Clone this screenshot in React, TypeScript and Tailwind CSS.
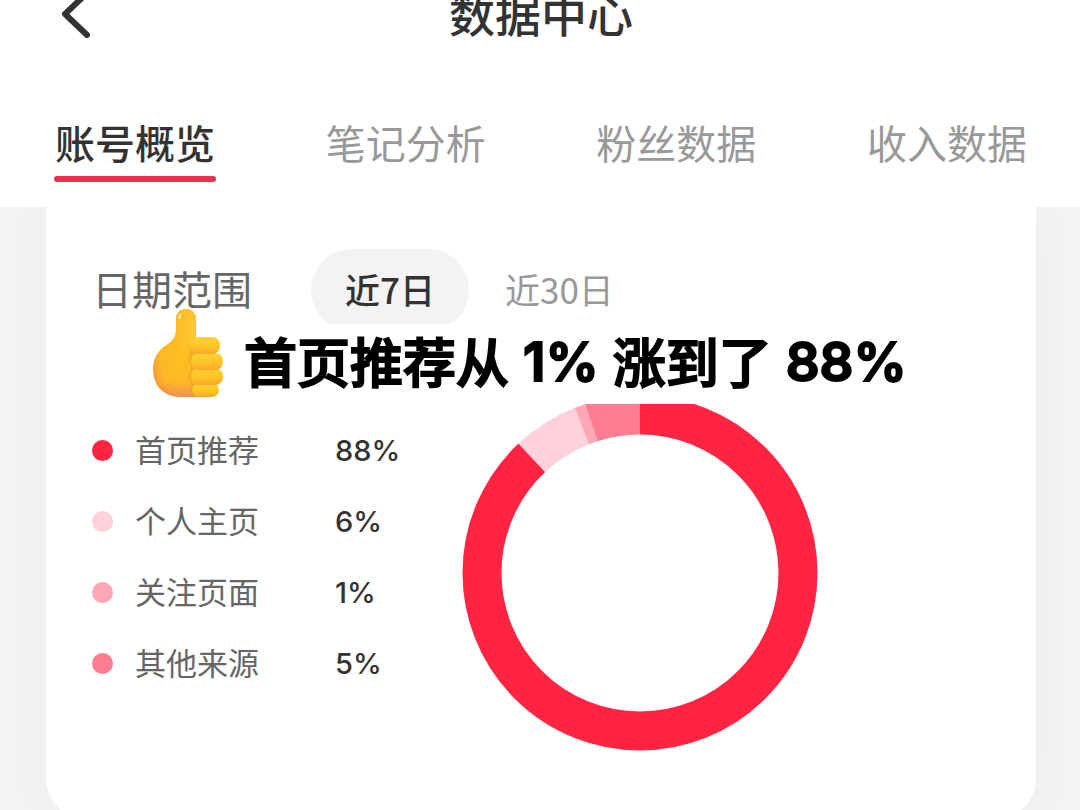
const tabs = ["账号概览", "笔记分析", "粉丝数据", "收入数据"];

const sources = [
  { name: "首页推荐", value: 88, dot: "bg-[#ff2442]", stroke: "stroke-[#ff2442]" },
  { name: "个人主页", value: 6, dot: "bg-[#ffd1da]", stroke: "stroke-[#ffd1da]" },
  { name: "关注页面", value: 1, dot: "bg-[#ffa7b5]", stroke: "stroke-[#ffa7b5]" },
  { name: "其他来源", value: 5, dot: "bg-[#ff7d90]", stroke: "stroke-[#ff7d90]" },
];

const ThumbsUp = () => (
  <svg viewBox="0 0 74 92" className="h-[92px] w-[74px] shrink-0" aria-hidden="true">
    <defs>
      <radialGradient id="palm" cx="0.62" cy="0.5" r="0.7">
        <stop offset="0" stopColor="#ffbf1f" />
        <stop offset="0.65" stopColor="#fdb827" />
        <stop offset="1" stopColor="#f2963a" />
      </radialGradient>
      <linearGradient id="thumb" x1="0" y1="0" x2="1" y2="0">
        <stop offset="0" stopColor="#f9a72f" />
        <stop offset="0.5" stopColor="#ffc42b" />
        <stop offset="1" stopColor="#ffd63c" />
      </linearGradient>
      <linearGradient id="finger" x1="0" y1="0" x2="0" y2="1">
        <stop offset="0" stopColor="#ffd335" />
        <stop offset="0.55" stopColor="#ffc426" />
        <stop offset="1" stopColor="#f8a829" />
      </linearGradient>
      <linearGradient id="base" x1="0" y1="0" x2="0" y2="1">
        <stop offset="0.82" stopColor="#f28a55" stopOpacity="0" />
        <stop offset="1" stopColor="#ee8461" stopOpacity="0.8" />
      </linearGradient>
    </defs>
    <path
      d="M24 11C24 5 28 1 34 1s10 4 10 10v22l2 8v48H29C12 89 1 78 1 61c0-12 6-20 15-25 6-4 8-8 8-15z"
      fill="url(#palm)"
    />
    <path d="M24 11C24 5 28 1 34 1s10 4 10 10v22c-6 3-10 5-12 10-3-4-10-5-16-7 6-4 8-8 8-15z" fill="url(#thumb)" fillOpacity="0.55" />
    <path
      d="M24 11C24 5 28 1 34 1s10 4 10 10v22l2 8v48H29C12 89 1 78 1 61c0-12 6-20 15-25 6-4 8-8 8-15z"
      fill="url(#base)"
    />
    <path d="M41 38c-5 5-5 15-2 21-3 5-3 12 0 16-2 6 0 11 3 14h14V33z" fill="#ee982b" fillOpacity="0.45" />
    <rect x="40" y="75" width="27" height="14" rx="7" fill="url(#finger)" />
    <rect x="39" y="60" width="32" height="17" rx="8" fill="url(#finger)" />
    <rect x="39" y="45" width="32" height="17" rx="8" fill="url(#finger)" />
    <rect x="39" y="29" width="29" height="17" rx="8" fill="url(#finger)" />
    <path d="M26 11c0-3 1-5 3-6v6z" fill="#fff1c9" fillOpacity="0.7" />
  </svg>
);

const SourceChart = () => {
  let start = 0;

  return (
    <svg viewBox="0 0 356 356" className="h-[356px] w-[356px] shrink-0" role="img" aria-label="来源占比">
      <g transform="rotate(-90 178 178)" fill="none" strokeWidth="39">
        {sources.map((item) => {
          const offset = -start;
          start += item.value;
          return (
            <circle
              key={item.name}
              cx="178"
              cy="178"
              r="158"
              pathLength="100"
              strokeDasharray={`${item.value} ${100 - item.value}`}
              strokeDashoffset={offset}
              className={item.stroke}
            />
          );
        })}
      </g>
    </svg>
  );
};

const App = () => {
  return (
    <div className="h-screen overflow-hidden bg-[#f3f3f3] font-['Noto_Sans_CJK_SC',sans-serif] text-[#333333]">
      <header className="relative z-10 bg-white pr-[52px] pb-[25px] pl-[54px]">
        <div className="-mt-4 grid h-16 grid-cols-[40px_1fr_40px] items-center">
          <button type="button" aria-label="返回">
            <svg viewBox="0 0 40 48" className="h-12 w-10" fill="none" stroke="currentColor" strokeWidth="6" strokeLinecap="round" strokeLinejoin="round">
              <path d="M32 2 11 22 33 43" />
            </svg>
          </button>
          <h1 className="pb-2 text-center text-[46px] leading-none font-medium">数据中心</h1>
        </div>

        <nav className="mt-[70px] flex justify-between">
          {tabs.map((tab, i) => (
            <button
              key={tab}
              type="button"
              className={
                i === 0
                  ? "flex w-[162px] flex-col items-center text-[40px] leading-12 font-medium after:mt-[10px] after:h-[6px] after:w-full after:rounded-full after:bg-[#e0364f]"
                  : "flex w-[162px] flex-col items-center text-[40px] leading-12 text-[#999999]"
              }
            >
              {tab}
            </button>
          ))}
        </nav>
      </header>

      <main className="relative mr-[44px] ml-[46px] rounded-b-[40px] bg-white px-[46px] pt-[42px] pb-[68px] shadow-[0_0_48px_rgba(0,0,0,0.03)]">
        <div className="flex h-[82px] items-center">
          <span className="w-[219px] pb-1 text-[40px] leading-none text-[#666666]">日期范围</span>
          <button type="button" className="h-full w-[158px] rounded-full bg-[#f3f3f3] pb-1 text-[35px] leading-none font-medium">
            近7日
          </button>
          <button type="button" className="ml-9 pb-1 text-[35px] leading-none text-[#999999]">
            近30日
          </button>
        </div>

        <div className="mt-16 flex">
          <ul className="w-[370px] pt-5">
            {sources.map((item) => (
              <li key={item.name} className="flex h-[71px] items-center leading-none">
                <span className={`mr-[22px] size-[21px] rounded-full ${item.dot}`} />
                <span className="w-[200px] pb-1 text-[31px] text-[#666666]">{item.name}</span>
                <span className="font-['Inter',sans-serif] text-[29px] font-medium">{item.value}%</span>
              </li>
            ))}
          </ul>
          <SourceChart />
        </div>

        {/* caption strip across the card */}
        <div className="absolute inset-x-0 top-[117px] flex h-20 items-center bg-white pl-[106px] text-black">
          <div className="-mt-5">
            <ThumbsUp />
          </div>
          <p className="ml-[18px] flex items-center gap-[14px] text-[53px] leading-none font-medium whitespace-nowrap [-webkit-text-stroke:2px_black]">
            <span className="pb-2">首页推荐从</span>
            <span className="pb-1 font-['Inter',sans-serif] font-semibold">1%</span>
            <span className="pb-2">涨到了</span>
            <span className="pb-1 font-['Inter',sans-serif] font-semibold">88%</span>
          </p>
        </div>
      </main>
    </div>
  );
};

export default App;
